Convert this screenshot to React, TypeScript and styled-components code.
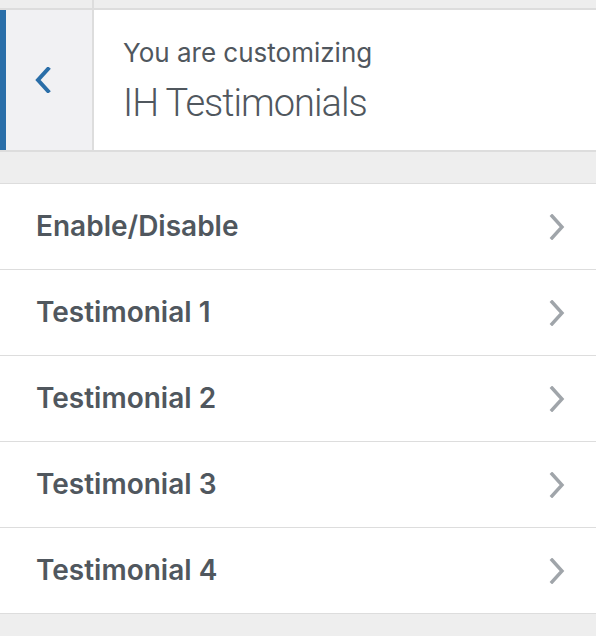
import React from "react";
import styled, { createGlobalStyle } from "styled-components";

const Global = createGlobalStyle`
  html, body {
    margin: 0;
    padding: 0;
    background: #eeeeee;
  }
  body {
    font-family: Inter, "Liberation Sans", sans-serif;
    color: #50575e;
  }
`;

const Panel = styled.div`
  width: 596px;
  height: 636px;
  overflow: hidden;
  background: #eeeeee;
`;

const TopStrip = styled.div`
  height: 8px;
  display: flex;
`;

const StripCell = styled.div`
  width: 92px;
  border-right: 2px solid #dddddd;
`;

const Header = styled.div`
  display: flex;
  height: 140px;
  background: #ffffff;
  border-top: 2px solid #dddddd;
  border-bottom: 2px solid #dddddd;
`;

const BackButton = styled.button`
  flex: 0 0 auto;
  width: 94px;
  box-sizing: border-box;
  border: 0;
  border-left: 6px solid #2a6ea8;
  border-right: 2px solid #dddddd;
  background: #f1f1f3;
  padding: 0 12px 0 0;
  display: flex;
  align-items: center;
  justify-content: center;
  cursor: pointer;
`;

const Titles = styled.div`
  display: flex;
  flex-direction: column;
  padding: 28px 0 0 29px;
`;

const Sub = styled.span`
  font-size: 26px;
  font-weight: 400;
  line-height: 30px;
  color: #50575e;
`;

const Title = styled.span`
  margin-top: 12px;
  font-family: Roboto, "Liberation Sans", sans-serif;
  font-size: 38px;
  font-weight: 300;
  line-height: 46px;
  letter-spacing: -1px;
  color: #50575e;
`;

const Gap = styled.div`
  height: 31px;
`;

const List = styled.ul`
  list-style: none;
  margin: 0;
  padding: 0;
  border-top: 1px solid #dddddd;
`;

const Row = styled.li`
  height: 85px;
  background: #ffffff;
  border-bottom: 1px solid #dddddd;
  display: flex;
  align-items: center;
  justify-content: space-between;
  padding: 0 30px 0 36px;
`;

const Label = styled.span`
  font-size: 28px;
  font-weight: 600;
  color: #50575e;
  padding-bottom: 2px;
`;

const Chevron = ({ dir, color, weight }: { dir: "left" | "right"; color: string; weight: number }) => (
  <svg width="18" height="26" viewBox="0 0 18 26" fill="none">
    <path
      d={dir === "left" ? "M14 2 L4 13 L14 24" : "M4 2 L14 13 L4 24"}
      stroke={color}
      strokeWidth={weight}
      strokeLinecap="square"
    />
  </svg>
);

const items = ["Enable/Disable", "Testimonial 1", "Testimonial 2", "Testimonial 3", "Testimonial 4"];

export default function App() {
  return (
    <Panel>
      <Global />
      <TopStrip>
        <StripCell />
      </TopStrip>
      <Header>
        <BackButton aria-label="Back">
          <Chevron dir="left" color="#2a6ea8" weight={4} />
        </BackButton>
        <Titles>
          <Sub>You are customizing</Sub>
          <Title>IH Testimonials</Title>
        </Titles>
      </Header>
      <Gap />
      <List>
        {items.map((t) => (
          <Row key={t}>
            <Label>{t}</Label>
            <Chevron dir="right" color="#a0a5aa" weight={3.4} />
          </Row>
        ))}
      </List>
    </Panel>
  );
}
